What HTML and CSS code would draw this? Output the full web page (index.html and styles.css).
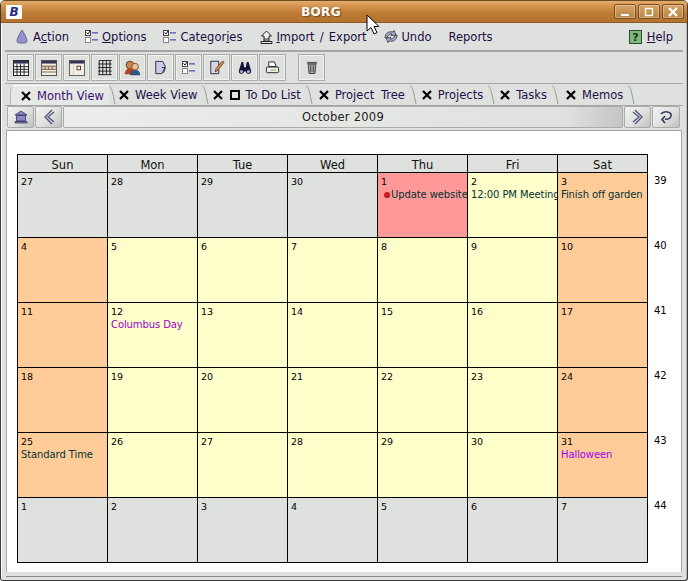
FILE: index.html
```html
<!DOCTYPE html>
<html lang="en">
<head>
<meta charset="utf-8">
<title>BORG</title>
<link rel="stylesheet" href="styles.css">
</head>
<body>
<div class="window">
  <header class="titlebar">
    <span class="app-icon">B</span>
    <span class="title">BORG</span>
    <span class="win-btns">
      <span class="win-btn"><svg width="16" height="14" viewBox="0 0 16 14"><rect x="4" y="9" width="8" height="2" fill="#fff"/></svg></span>
      <span class="win-btn"><svg width="16" height="14" viewBox="0 0 16 14"><rect x="4.500" y="3.500" width="7" height="7" fill="none" stroke="#fff" stroke-width="1.400"/></svg></span>
      <span class="win-btn"><svg width="16" height="14" viewBox="0 0 16 14"><path d="M4 3l8 8M12 3l-8 8" stroke="#fff" stroke-width="2.400"/></svg></span>
    </span>
  </header>

  <nav class="menubar">
    <span class="menu m-action"><svg width="12" height="15" viewBox="0 0 12 15"><path d="M6 1C4 4 1 9 1 12c0 2 2 2 5 2s5 0 5-2C11 9 8 4 6 1z" fill="#9292d2" stroke="#66668c"/></svg><span>A<u>c</u>tion</span></span>
    <span class="menu m-options"><svg width="13" height="13" viewBox="0 0 13 13"><use href="#i-list"/></svg><span><u>O</u>ptions</span></span>
    <span class="menu m-cats"><svg width="13" height="13" viewBox="0 0 13 13"><use href="#i-list"/></svg><span>Categor<u>i</u>es</span></span>
    <span class="menu m-import"><svg width="13" height="14" viewBox="0 0 13 14"><path d="M6.500 1L1.500 6H4v3h5V6h2.500zM4 9v2h5V9M1 11.500h11v2H1z" fill="#eee" stroke="#222"/></svg><span><u>I</u>mport / Export</span></span>
    <span class="menu m-undo"><svg width="14" height="13" viewBox="0 0 14 13"><path d="M1 8C1 3 5 1 9 2l1-1.500L12 5 7 5.500 8 4C6 3.500 4 5 3.500 7zM13 5c0 5-4 7-8 6l-1 1.500L2 8l5-.5L6 9c2 .5 4-1 4.500-3z" fill="#a8a8dc" stroke="#333" stroke-width=".8"/></svg><span>Undo</span></span>
    <span class="menu m-reports"><span>Reports</span></span>
    <span class="menu m-help"><svg class="help-ic" width="13" height="14" viewBox="0 0 13 14"><rect x=".5" y=".5" width="12" height="13" fill="#7fb77f" stroke="#2c4c2c"/><text x="6.500" y="11" text-anchor="middle" class="help-q">?</text></svg><span><u>H</u>elp</span></span>
  </nav>

  <div class="toolbar">
    <span class="tool"><svg width="16" height="16" viewBox="0 0 18 18"><use href="#i-cal"/></svg></span>
    <span class="tool"><svg width="16" height="16" viewBox="0 0 18 18"><use href="#i-week"/></svg></span>
    <span class="tool"><svg width="16" height="16" viewBox="0 0 18 18"><use href="#i-day"/></svg></span>
    <span class="tool"><svg width="16" height="16" viewBox="0 0 18 18"><use href="#i-grid"/></svg></span>
    <span class="tool"><svg width="17" height="17" viewBox="0 0 20 20"><circle cx="7" cy="7" r="4.500" fill="#c98a4a" stroke="#5a3010"/><path d="M1 18c0-5 3-7 6-7s5 2 5 7z" fill="#b8441f"/><circle cx="13" cy="9" r="4" fill="#eabf9a" stroke="#6a4a20"/><path d="M7 19c0-5 3-6 6-6s6 1 6 6z" fill="#35557f"/></svg></span>
    <span class="tool"><svg width="14" height="15" viewBox="0 0 16 16"><path d="M2 1h8l3 6-4 8H2z" fill="#c8c8ec" stroke="#222"/><path d="M9 8l4 0 -2 6" fill="none" stroke="#222"/></svg></span>
    <span class="tool"><svg width="13" height="13" viewBox="0 0 13 13"><use href="#i-list"/></svg></span>
    <span class="tool"><svg width="16" height="17" viewBox="0 0 18 18"><path d="M2 2h9v14H2z" fill="#d4d4f0" stroke="#222"/><path d="M7 14l1-4 7-8 2 1-7 9z" fill="#e0a030" stroke="#633"/></svg></span>
    <span class="tool"><svg width="14" height="14" viewBox="0 0 16 16"><path d="M4 1h2l1 6h2l1-6h2l3 10a3 3 0 1 1-6 1H7a3 3 0 1 1-6-1z" fill="#14143a"/><circle cx="4" cy="12" r="1.800" fill="#aac"/><circle cx="12" cy="12" r="1.800" fill="#aac"/></svg></span>
    <span class="tool"><svg width="15" height="15" viewBox="0 0 16 16"><path d="M4 2h6l2 5H4z" fill="#fff" stroke="#222"/><rect x="1.500" y="7.500" width="13" height="6" rx="1" fill="#eee" stroke="#222"/><rect x="6" y="10" width="6" height="1.500" fill="#9c6"/></svg></span>
    <span class="tool tool-sep"><svg width="12" height="15" viewBox="0 0 14 17"><rect x="1" y="2" width="12" height="2" fill="#555"/><path d="M2.500 4.500h9l-1 11h-7z" fill="#aaa" stroke="#333"/><path d="M5.500 6v8M8.500 6v8" stroke="#333"/></svg></span>
  </div>

  <div class="tabs">
    <span class="tab tab-on t-month"><svg class="x" width="10" height="10" viewBox="0 0 10 10"><use href="#i-x"/></svg><span>Month View</span></span>
    <svg class="slash" width="7" height="20" viewBox="0 0 7 20"><path d="M0 1c2 0 3 3 6 18" fill="none" stroke="#999"/></svg>
    <span class="tab t-week"><svg class="x" width="10" height="10" viewBox="0 0 10 10"><use href="#i-x"/></svg><span>Week View</span></span>
    <svg class="slash" width="7" height="20" viewBox="0 0 7 20"><path d="M0 1c2 0 3 3 6 18" fill="none" stroke="#999"/></svg>
    <span class="tab t-todo"><svg class="x" width="10" height="10" viewBox="0 0 10 10"><use href="#i-x"/></svg><svg class="box" width="10" height="10" viewBox="0 0 10 10"><rect x="1" y="1" width="8" height="8" fill="none" stroke="#000" stroke-width="2"/></svg><span>To Do List</span></span>
    <svg class="slash" width="7" height="20" viewBox="0 0 7 20"><path d="M0 1c2 0 3 3 6 18" fill="none" stroke="#999"/></svg>
    <span class="tab t-tree"><svg class="x" width="10" height="10" viewBox="0 0 10 10"><use href="#i-x"/></svg><span>Project Tree</span></span>
    <svg class="slash" width="7" height="20" viewBox="0 0 7 20"><path d="M0 1c2 0 3 3 6 18" fill="none" stroke="#999"/></svg>
    <span class="tab t-proj"><svg class="x" width="10" height="10" viewBox="0 0 10 10"><use href="#i-x"/></svg><span>Projects</span></span>
    <svg class="slash" width="7" height="20" viewBox="0 0 7 20"><path d="M0 1c2 0 3 3 6 18" fill="none" stroke="#999"/></svg>
    <span class="tab t-task"><svg class="x" width="10" height="10" viewBox="0 0 10 10"><use href="#i-x"/></svg><span>Tasks</span></span>
    <svg class="slash" width="7" height="20" viewBox="0 0 7 20"><path d="M0 1c2 0 3 3 6 18" fill="none" stroke="#999"/></svg>
    <span class="tab t-memo"><svg class="x" width="10" height="10" viewBox="0 0 10 10"><use href="#i-x"/></svg><span>Memos</span></span>
    <svg class="slash" width="7" height="20" viewBox="0 0 7 20"><path d="M0 1c2 0 3 3 6 18" fill="none" stroke="#999"/></svg>
  </div>

  <div class="navbar">
    <span class="nav-btn"><svg width="14" height="14" viewBox="0 0 14 14"><path d="M7 1L1 5h12zM2.500 5.500h9V11h-9zM1 11.500h12V13H1z" fill="#8a8ac8" stroke="#33335a" stroke-width=".8"/></svg></span>
    <span class="nav-btn"><svg width="12" height="16" viewBox="0 0 12 16"><path d="M9 1L2 8l7 7M11 3L5 8l6 5" fill="none" stroke="#55557f" stroke-width="1.400"/></svg></span>
    <span class="nav-month">October 2009</span>
    <span class="nav-btn"><svg width="12" height="16" viewBox="0 0 12 16"><path d="M3 1l7 7-7 7M1 3l6 5-6 5" fill="none" stroke="#55557f" stroke-width="1.400"/></svg></span>
    <span class="nav-btn nav-last"><svg width="14" height="14" viewBox="0 0 14 14"><path d="M2 4c2-3 8-3 10 0 1 3-2 6-6 5M6 6L3 9.500 6 13" fill="none" stroke="#33335a" stroke-width="1.600"/></svg></span>
  </div>

  <main class="panel">
    <div class="calendar">
      <div class="cal-row cal-head">
        <div class="dow">Sun</div><div class="dow">Mon</div><div class="dow">Tue</div><div class="dow">Wed</div><div class="dow">Thu</div><div class="dow">Fri</div><div class="dow">Sat</div>
      </div>
      <div class="cal-row">
        <div class="day off"><span>27</span></div><div class="day off"><span>28</span></div><div class="day off"><span>29</span></div><div class="day off"><span>30</span></div>
        <div class="day today"><span>1</span><span class="ev"><i class="dot"></i>Update website</span></div>
        <div class="day"><span>2</span><span class="ev">12:00 PM Meeting</span></div>
        <div class="day wkend"><span>3</span><span class="ev">Finish off garden</span></div>
        <div class="wk">39</div>
      </div>
      <div class="cal-row">
        <div class="day wkend"><span>4</span></div><div class="day"><span>5</span></div><div class="day"><span>6</span></div><div class="day"><span>7</span></div><div class="day"><span>8</span></div><div class="day"><span>9</span></div><div class="day wkend"><span>10</span></div>
        <div class="wk">40</div>
      </div>
      <div class="cal-row">
        <div class="day wkend"><span>11</span></div><div class="day"><span>12</span><span class="ev hol">Columbus Day</span></div><div class="day"><span>13</span></div><div class="day"><span>14</span></div><div class="day"><span>15</span></div><div class="day"><span>16</span></div><div class="day wkend"><span>17</span></div>
        <div class="wk">41</div>
      </div>
      <div class="cal-row">
        <div class="day wkend"><span>18</span></div><div class="day"><span>19</span></div><div class="day"><span>20</span></div><div class="day"><span>21</span></div><div class="day"><span>22</span></div><div class="day"><span>23</span></div><div class="day wkend"><span>24</span></div>
        <div class="wk">42</div>
      </div>
      <div class="cal-row">
        <div class="day wkend"><span>25</span><span class="ev">Standard Time</span></div><div class="day"><span>26</span></div><div class="day"><span>27</span></div><div class="day"><span>28</span></div><div class="day"><span>29</span></div><div class="day"><span>30</span></div><div class="day wkend"><span>31</span><span class="ev hol2">Halloween</span></div>
        <div class="wk">43</div>
      </div>
      <div class="cal-row">
        <div class="day off"><span>1</span></div><div class="day off"><span>2</span></div><div class="day off"><span>3</span></div><div class="day off"><span>4</span></div><div class="day off"><span>5</span></div><div class="day off"><span>6</span></div><div class="day off"><span>7</span></div>
        <div class="wk">44</div>
      </div>
    </div>
  </main>

  <svg class="cursor" width="16" height="22" viewBox="0 0 16 22"><path d="M1 1v16l4-3.500 3 6.500 3-1.500-3-6h5z" fill="#fff" stroke="#000"/></svg>
</div>

<svg class="defs" width="0" height="0">
  <defs>
    <g id="i-list"><rect x=".5" y=".5" width="5" height="5" fill="#fff" stroke="#444"/><path d="M1.500 2.500l1.500 1.500 2-3" fill="none" stroke="#111"/><rect x=".5" y="7.500" width="5" height="5" fill="#fff" stroke="#888"/><rect x="7" y="2" width="6" height="1.600" fill="#7070c0"/><rect x="7" y="9" width="6" height="1.600" fill="#7070c0"/></g>
    <g id="i-x"><path d="M1 1l8 8M9 1L1 9" stroke="#000" stroke-width="2.200"/></g>
    <g id="i-cal"><rect x=".5" y=".5" width="17" height="17" fill="#fff" stroke="#111"/><rect x="1" y="1" width="16" height="3" fill="#33335a"/><path d="M4.500 4v13M8.500 4v13M12.500 4v13M1 7.500h16M1 10.500h16M1 13.500h16" stroke="#111"/></g>
    <g id="i-week"><rect x=".5" y=".5" width="17" height="17" fill="#f4ede4" stroke="#444"/><rect x="1" y="1" width="16" height="3" fill="#33335a"/><rect x="1" y="6" width="16" height="5" fill="#e8c8c0"/><path d="M1 7h16M1 10.500h16M1 13.500h16M4.500 7v4M8.500 7v4M12.500 7v4" stroke="#664"/></g>
    <g id="i-day"><rect x=".5" y=".5" width="17" height="17" fill="#f4ede4" stroke="#555"/><rect x="1" y="1" width="16" height="3" fill="#33335a"/><rect x="9" y="7" width="4" height="4" fill="#fff" stroke="#522"/><path d="M5 4v13" stroke="#ccc"/></g>
    <g id="i-grid"><path d="M2.500 .5h14M1.500 4.500h15M1.500 8.500h15M1.500 12.500h15M1.500 16.500h15M2.500 .5v16M6.500 .5v16M10.500 .5v16M14.500 .5v16" stroke="#111" fill="none"/></g>
  </defs>
</svg>
</body>
</html>
```

FILE: styles.css
```css
* { box-sizing: border-box; }
html, body { margin: 0; padding: 0; background: #fff; }
body { width: 688px; height: 581px; overflow: hidden; font-family: "DejaVu Sans", sans-serif; }
.defs { position: absolute; }

.window {
  position: relative;
  width: 688px; height: 581px;
  display: flex; flex-direction: column;
  background: #dfe1de;
  border: 1px solid #3c3c3c;
  border-top-color: #6e4a20;
  border-radius: 5px 5px 3px 3px;
  padding: 0 4px 8px 4px;
  overflow: hidden;
  box-shadow: inset 1px 0 0 #fff, inset -1px 0 0 #b8b8b4;
}

.titlebar {
  flex: none; height: 22px; margin: 0 -4px; padding: 0 3px 0 5px;
  display: flex; align-items: center; position: relative;
  background: linear-gradient(#e2ad6e 0, #d28f47 30%, #bd7a33 60%, #b4722e 100%);
  border-bottom: 1px solid #8c5a24;
}
.app-icon {
  width: 16px; height: 14px; background: #fff; border-radius: 1px;
  color: #2a2a88; font: italic bold 12px/14px "DejaVu Sans", sans-serif; text-align: center;
}
.title {
  flex: 1; text-align: center; color: #fff; font-size: 12px; font-weight: bold;
  padding-left: 6px; text-shadow: 1px 1px 1px #6e4a20; letter-spacing: .3px;
}
.win-btns { display: flex; gap: 2px; }
.win-btn {
  width: 22px; height: 15px; border: 1px solid #7c5020; border-radius: 2px;
  background: linear-gradient(#d8a468, #b98244);
  box-shadow: inset 0 0 0 1px rgba(255,255,255,.3);
  display: flex; align-items: center; justify-content: center;
}

.menubar {
  flex: none; height: 29px; padding-left: 11px;
  display: flex; align-items: center;
  border-bottom: 2px solid #a4a6a3;
  color: #1c0c44; font-size: 11.5px; word-spacing: 1.5px;
}
.menu { display: flex; align-items: center; gap: 4px; }
.m-action { gap: 5px; }
.m-options { margin-left: 16px; }
.m-cats { margin-left: 17px; }
.m-import { margin-left: 18px; gap: 3px; }
.m-undo { margin-left: 18px; gap: 3px; }
.m-reports { margin-left: 17px; }
.m-help { margin-left: auto; margin-right: 10px; gap: 5px; }
.menu u { text-decoration-thickness: 1px; }
.help-q { font: bold 11px "DejaVu Sans", sans-serif; fill: #113311; }

.toolbar {
  flex: none; height: 32px; padding: 2px 0 0 2px;
  display: flex; align-items: flex-start; gap: 1px;
  border-bottom: 1px solid #a4a6a3;
}
.tool {
  width: 27px; height: 27px; border: 1px solid #a9aba8;
  box-shadow: inset 0 0 0 1px #eef0ed;
  display: flex; align-items: center; justify-content: center;
}
.tool-sep { margin-left: 11px; }

.tabs {
  flex: none; height: 21px; padding: 1px 0 0 5px;
  display: flex; align-items: stretch;
  color: #24104c; font-size: 11.5px;
}
.tab { display: flex; align-items: center; gap: 6px; padding-right: 5px; }
.tab-on {
  background: #e6e8e5; border-top: 1px solid #fff; border-left: 1px solid #b4b6b3;
  border-radius: 6px 0 0 0; color: #3a1070;
}
.t-month { padding-left: 10px; }
.t-week { padding-left: 3px; }
.t-todo { padding-left: 4px; gap: 7px; }
.t-todo .box { margin-right: -2px; }
.t-tree { padding-left: 6px; word-spacing: 3px; }
.t-proj { padding-left: 5px; }
.t-task { padding-left: 5px; }
.t-memo { padding-left: 7px; }
.slash { flex: none; }
.x, .box { flex: none; }

.navbar {
  flex: none; height: 23px; display: flex; gap: 1px; padding: 0 3px 0 2px;
  border-top: 1px solid #a4a6a3;
}
.nav-btn {
  flex: none; width: 27px; height: 22px; border: 1px solid #a9aba8; border-radius: 2px;
  background: linear-gradient(135deg, #f2f3f1 0, #dfe1de 55%, #bfc1be 100%);
  display: flex; align-items: center; justify-content: center;
}
.nav-last { width: 28px; }
.nav-month {
  flex: 1; height: 22px; border: 1px solid #a9aba8; border-radius: 2px;
  background: linear-gradient(90deg, #eceeeb, #dfe1de 90%, #c4c6c3);
  text-align: center; font-size: 11.5px; line-height: 20px; color: #222;
  letter-spacing: .25px;
}

.panel {
  flex: 1; background: #fff; margin: 2px 1px 0 1px;
  padding: 23px 0 0 10px;
  border-top: 1px solid #a4a6a3;
  border-left: 1px solid #a4a6a3;
  border-right: 1px solid #a4a6a3;
  box-shadow: 0 4px 0 #dfe1de, 0 5px 0 #8a8c89;
}
.calendar { display: flex; flex-direction: column; }
.cal-row { display: grid; grid-template-columns: repeat(7, 90px) 40px; height: 65px; }
.cal-head { height: 19px; }
.dow {
  background: #dfe1de; border: 1px solid #000;
  margin-right: -1px; text-align: center; font-size: 11.5px; line-height: 20px; color: #111;
}
.day {
  display: flex; flex-direction: column;
  background: #ffffcc; border: 1px solid #000; margin: -1px -1px 0 0; height: 66px;
  padding: 3px 3px; font-size: 9.5px; line-height: 12px; color: #000;
  overflow: hidden; white-space: nowrap;
}
.off { background: #dfe1de; }
.wkend { background: #ffcc99; }
.today { background: #ff9999; }
.ev { color: #003333; margin-top: 1px; font-size: 10px; letter-spacing: -.1px; }
.hol { color: #9900cc; }
.hol2 { color: #a000ee; }
.dot {
  display: inline-block; width: 6px; height: 6px; border-radius: 50%;
  background: radial-gradient(circle at 40% 40%, #e22, #811); margin: 0 1px 0 3px;
}
.wk { padding: 2px 0 0 7px; font-size: 10px; line-height: 12px; color: #000; }

.cursor { position: absolute; left: 365px; top: 13px; }
```
